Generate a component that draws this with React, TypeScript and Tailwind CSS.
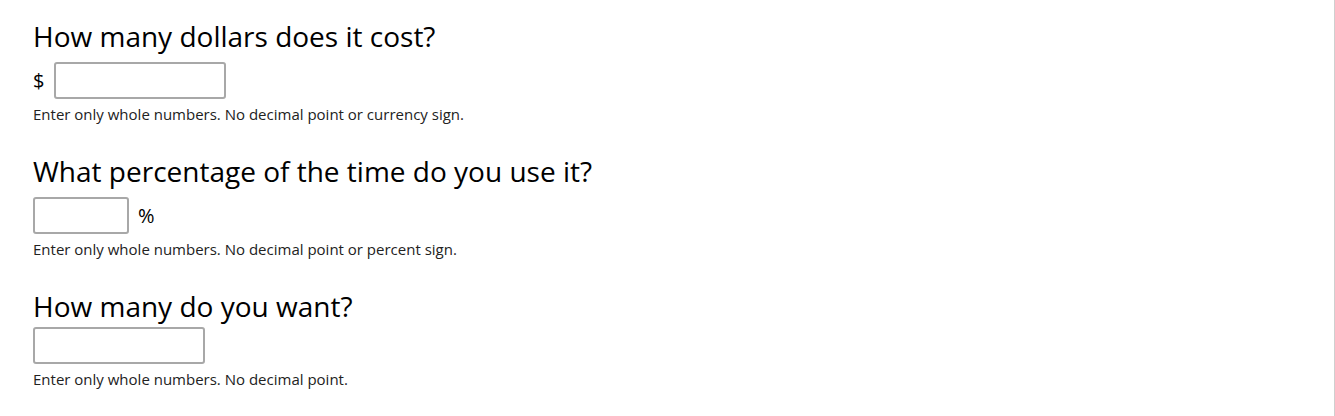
import React from "react";

const Hint = ({ children }: { children: React.ReactNode }) => (
  <p className="mt-[5px] text-[15px] leading-[20px] text-[#222]">{children}</p>
);

const App = () => {
  return (
    <div
      className="min-h-[416px] bg-white border-r border-[#cfcfcf] w-[1335px] pl-[33px] pt-[17px] text-black"
      style={{ fontFamily: '"Open Sans", "Noto Sans", sans-serif' }}
    >
      <section className="h-[135px]">
        <h2 className="text-[28px] leading-[38px] font-normal">How many dollars does it cost?</h2>
        <div className="mt-[7px] flex items-center gap-[10px]">
          <span className="text-[20px]">$</span>
          <input type="text" className="h-[37px] w-[172px] rounded-[3px] border-2 border-[#a8a8a8]" />
        </div>
        <Hint>Enter only whole numbers. No decimal point or currency sign.</Hint>
      </section>
      <section className="h-[135px]">
        <h2 className="text-[28px] leading-[38px] font-normal">What percentage of the time do you use it?</h2>
        <div className="mt-[7px] flex items-center gap-[9px]">
          <input type="text" className="h-[37px] w-[96px] rounded-[3px] border-2 border-[#a8a8a8]" />
          <span className="text-[20px]">%</span>
        </div>
        <Hint>Enter only whole numbers. No decimal point or percent sign.</Hint>
      </section>
      <section>
        <h2 className="text-[28px] leading-[38px] font-normal">How many do you want?</h2>
        <div className="mt-[2px] flex items-center">
          <input type="text" className="h-[37px] w-[172px] rounded-[3px] border-2 border-[#a8a8a8]" />
        </div>
        <Hint>Enter only whole numbers. No decimal point.</Hint>
      </section>
    </div>
  );
};

export default App;
